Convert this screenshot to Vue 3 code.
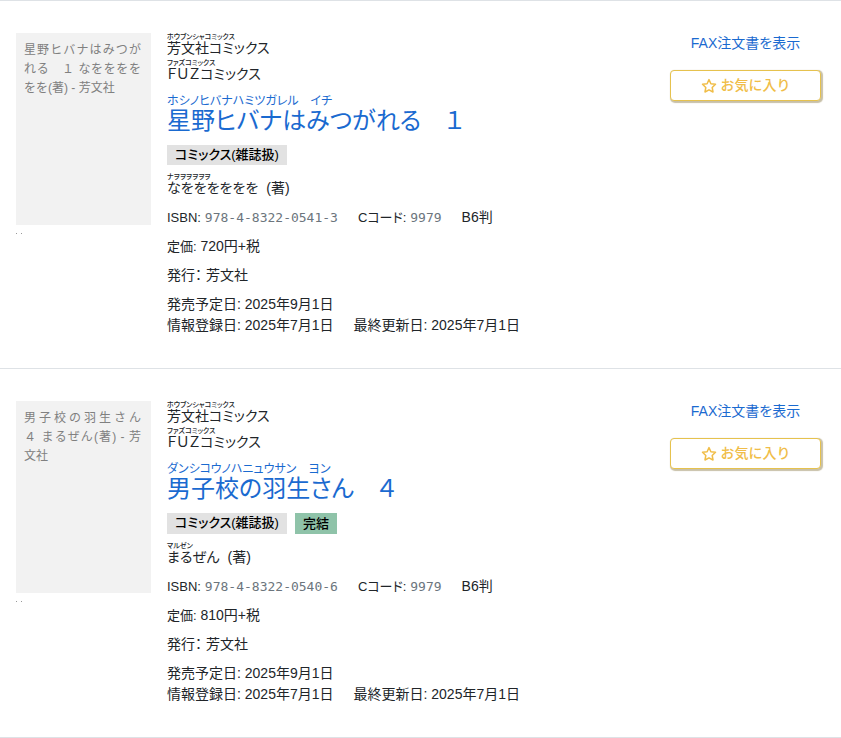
<script setup>
const books = [
  {
    id: '9784832205413',
    title: '星野ヒバナはみつがれる　１',
    titleKana: 'ホシノヒバナハミツガレル　イチ',
    cover: '星野ヒバナはみつがれる　１ なをををををを(著) - 芳文社',
    author: 'なをををををを',
    authorKana: 'ナヲヲヲヲヲヲ',
    isbn: '978-4-8322-0541-3',
    price: '720円+税',
    completed: false,
  },
  {
    id: '9784832205406',
    title: '男子校の羽生さん　４',
    titleKana: 'ダンシコウノハニュウサン　ヨン',
    cover: '男子校の羽生さん　４ まるぜん(著) - 芳文社',
    author: 'まるぜん',
    authorKana: 'マルゼン',
    isbn: '978-4-8322-0540-6',
    price: '810円+税',
    completed: true,
  },
]
const series = [
  { name: '芳文社コミックス', kana: 'ホウブンシャコミックス' },
  { name: 'ＦＵＺコミックス', kana: 'ファズコミックス' },
]
</script>

<template>
  <main class="list" lang="ja">
    <article v-for="book in books" :key="book.id" class="book">
      <div class="side">
        <div class="cover">{{ book.cover }}</div>
        <div class="dots"><i></i><i></i></div>
      </div>

      <div class="info">
        <div class="series">
          <ruby v-for="s in series" :key="s.name" class="kana-pair">{{ s.name }}<rt>{{ s.kana }}</rt></ruby>
        </div>
        <h2 class="title">
          <a href="#"><ruby class="kana-pair">{{ book.title }}<rt>{{ book.titleKana }}</rt></ruby></a>
        </h2>
        <div class="badges">
          <span class="badge">コミックス(雑誌扱)</span>
          <span v-if="book.completed" class="badge done">完結</span>
        </div>
        <div class="author">
          <ruby class="kana-pair">{{ book.author }}<rt>{{ book.authorKana }}</rt></ruby>
          <span>(著)</span>
        </div>
        <div class="line codes">
          <span><small>ISBN:</small> <span class="mono">{{ book.isbn }}</span></span>
          <span><small>Cコード:</small> <span class="mono">9979</span></span>
          <span>B6判</span>
        </div>
        <div class="line"><small>定価:</small> {{ book.price }}</div>
        <div class="line">発行： 芳文社</div>
        <div class="line">
          <div>発売予定日: 2025年9月1日</div>
          <div class="dates">
            <span>情報登録日: 2025年7月1日</span>
            <span>最終更新日: 2025年7月1日</span>
          </div>
        </div>
      </div>

      <div class="actions">
        <a href="#" class="fax">FAX注文書を表示</a>
        <button type="button" class="fav">
          <svg viewBox="0 0 16 16" width="16" height="16" aria-hidden="true">
            <path d="M8 1.6 L9.9 5.7 L14.5 6.3 L11.2 9.5 L12 14 L8 11.8 L4 14 L4.8 9.5 L1.5 6.3 L6.1 5.7 Z" />
          </svg>
          お気に入り
        </button>
      </div>
    </article>
  </main>
</template>

<style>
body {
  margin: 0;
  background: #fff;
}
</style>

<style scoped>
.list {
  border-top: 1px solid #dee2e6;
  font-family: "Liberation Sans", "Noto Sans CJK JP", sans-serif;
  font-size: 14px;
  line-height: 21px;
  color: #212529;
  font-feature-settings: "palt";
}
.book {
  display: flex;
  gap: 16px;
  padding: 32px 20px 32px 16px;
  border-bottom: 1px solid #dee2e6;
}
.side {
  flex: 0 0 135px;
}
.cover {
  box-sizing: border-box;
  height: 192px;
  padding: 8px 10px 8px 8px;
  background: #f2f2f2;
  color: #808080;
  font-size: 12px;
  font-feature-settings: normal;
  line-height: 19px;
  text-align: justify;
}
.dots {
  display: flex;
  gap: 4px;
  padding-top: 8px;
}
.dots i {
  width: 1px;
  height: 1px;
  background: #999;
}
.info {
  flex: 1;
  min-width: 0;
}
.kana-pair {
  display: flex;
  flex-direction: column-reverse;
  padding-bottom: 4px;
  line-height: 14px;
}
.kana-pair rt {
  display: block;
  font-size: 7px;
  font-weight: 500;
  line-height: 8px;
  text-align: left;
  white-space: nowrap;
}
.title {
  margin: 9px 0 11px;
  font-size: 24px;
  font-weight: 400;
}
.title .kana-pair {
  padding-bottom: 0;
  line-height: 26px;
}
.title rt {
  font-size: 12px;
  font-weight: 400;
  line-height: 14px;
}
a {
  color: #1a6ad0;
  text-decoration: none;
}
.badges {
  display: flex;
  gap: 8px;
  margin-bottom: 8px;
}
.badge {
  padding: 0 8px;
  background: #e2e2e2;
  color: #000;
  font-size: 13px;
  font-weight: 500;
  line-height: 20px;
}
.done {
  background: #8fc3a9;
  line-height: 21px;
}
.author {
  display: flex;
  align-items: flex-end;
  gap: 8px;
  margin-bottom: 8px;
}
.author span {
  padding-bottom: 4px;
  line-height: 14px;
}
.line {
  margin-bottom: 8px;
}
.line:last-child {
  margin-bottom: 0;
}
.line small {
  font-size: 13px;
  line-height: 16px;
}
.codes,
.dates {
  display: flex;
  gap: 20px;
}
.mono {
  font-family: "DejaVu Sans Mono", monospace;
  font-size: 13px;
  line-height: 16px;
  color: #6c757d;
}
.actions {
  flex: 0 0 151px;
  text-align: center;
}
.fax {
  display: block;
  margin-bottom: 16px;
}
.fav {
  display: flex;
  align-items: center;
  justify-content: center;
  gap: 4px;
  width: 100%;
  height: 31px;
  padding: 0;
  border: 1px solid #e6c24e;
  border-radius: 4px;
  background: #fff;
  box-shadow: 1px 1px 1px 1px #c8c0a8;
  color: #f0bd48;
  font: inherit;
  font-weight: 500;
  font-feature-settings: normal;
}
.fav svg {
  fill: none;
  stroke: currentColor;
  stroke-width: 1.5;
  stroke-linejoin: round;
}
</style>
